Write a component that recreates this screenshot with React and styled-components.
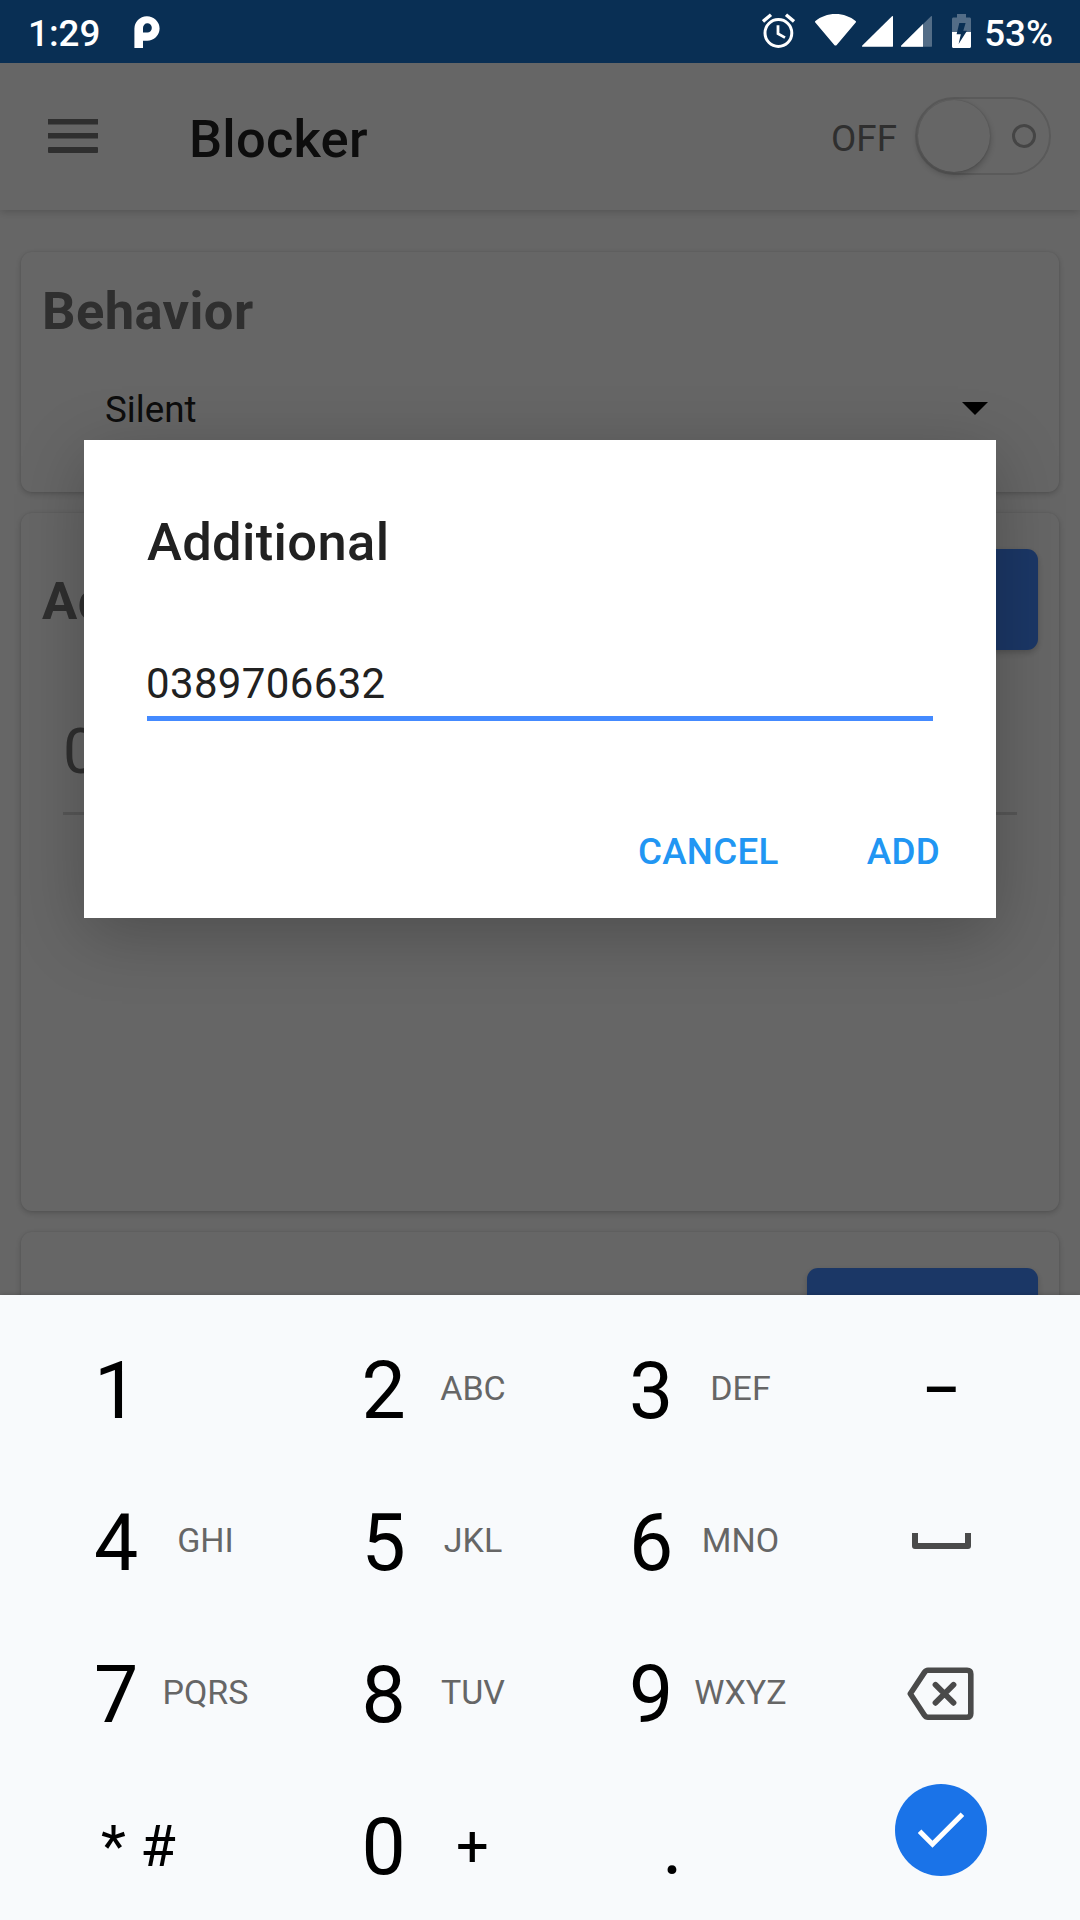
import React, { useState } from 'react'
import styled, { createGlobalStyle } from 'styled-components';

const GlobalStyle = createGlobalStyle`
    * {
        box-sizing: border-box;
    }
    body {
        margin: 0;
        font-family: Roboto, sans-serif;
    }
`

const Phone = styled.div`
    display: flex;
    flex-direction: column;
    width: 1080px;
    height: 1920px;
    overflow: hidden;
    background: #fff;
`

/* status bar */

const StatusBar = styled.div`
    display: flex;
    align-items: flex-start;
    flex: none;
    height: 63px;
    padding: 0 27px 0 28px;
    background: #092f54;
    color: #fff;

    svg {
        display: block;
        flex: none;
    }
`

const StatusText = styled.span`
    font-size: 36.75px;
    font-weight: 500;
    line-height: 43px;
    padding-top: 12px;
`

const NotificationIcon = styled.svg`
    margin: 16px 0 0 34px;
`

const StatusIcons = styled.div`
    display: flex;
    margin-left: auto;
    margin-right: 13px;
`

/* page behind the dialog */

const Page = styled.div`
    position: relative;
    flex: none;
    height: 1232px;
    overflow: hidden;
    background: #fff;
`

const Toolbar = styled.div`
    display: flex;
    align-items: center;
    height: 147px;
    padding: 0 29px 0 48px;
    box-shadow: 0 2px 8px rgba(0, 0, 0, 0.18);
`

const MenuIcon = styled.svg`
    display: block;
    margin-top: -1px;
`

const ToolbarTitle = styled.h1`
    margin: 4px 0 0 91px;
    color: #212121;
    font-size: 52.5px;
    font-weight: 500;
    line-height: 62px;
    letter-spacing: 0.2px;
`

const SwitchLabel = styled.span`
    margin: 5px 18px 0 auto;
    color: #757575;
    font-size: 36.75px;
    line-height: 44px;
`

const Switch = styled.button`
    display: flex;
    align-items: center;
    justify-content: space-between;
    width: 136px;
    height: 78px;
    padding: 0 13px 0 1px;
    border: 2px solid #e0e0e0;
    border-radius: 39px;
    background: #fff;
    margin-top: -1px;
`

const Thumb = styled.span`
    width: 72px;
    height: 72px;
    border-radius: 50%;
    background: #fff;
    box-shadow: 0 3px 7px rgba(0, 0, 0, 0.25), 0 0 2px rgba(0, 0, 0, 0.2);
`

const OffRing = styled.span`
    width: 24px;
    height: 24px;
    border: 3px solid #adadad;
    border-radius: 50%;
`

const Content = styled.div`
    display: flex;
    flex-direction: column;
    gap: 21px;
    padding: 42px 21px 0;
`

const Card = styled.section`
    flex: none;
    height: ${props => props.$height}px;
    padding: 0 21px;
    border-radius: 11px;
    background: #fff;
    box-shadow: 0 2px 6px rgba(0, 0, 0, 0.2), 0 0 2px rgba(0, 0, 0, 0.1);
`

const CardHeader = styled.div`
    display: flex;
    align-items: center;
    justify-content: space-between;
    height: ${props => props.$height}px;
    padding-top: ${props => props.$top || 0}px;
`

const CardTitle = styled.h2`
    margin: ${props => props.$drop || 0}px 0 0;
    color: #757575;
    font-size: 52.5px;
    font-weight: 700;
    line-height: 62px;
    letter-spacing: 0.4px;
`

const CardButton = styled.button`
    width: 231px;
    height: 101px;
    border: 0;
    border-radius: 11px;
    background: #448aff;
    box-shadow: 0 3px 6px rgba(0, 0, 0, 0.2);
`

const Select = styled.div`
    display: flex;
    align-items: center;
    justify-content: space-between;
    height: 44px;
    margin-top: 19px;
    padding: 0 50px 0 63px;
    color: #212121;
    font-size: 36.75px;
    line-height: 44px;
`

const Caret = styled.span`
    margin-bottom: 4px;
    border-left: 13px solid transparent;
    border-right: 13px solid transparent;
    border-top: 13px solid #000;
`

const NumberRow = styled.div`
    height: 126px;
    margin: 39px 21px 0;
    border-bottom: 3px solid #d9d9d9;
    color: #757575;
    font-size: 63px;
    line-height: 125px;
`

/* dialog */

const Scrim = styled.div`
    position: absolute;
    inset: 0;
    display: flex;
    justify-content: center;
    align-items: flex-start;
    padding-top: 377px;
    background: rgba(0, 0, 0, 0.6);
`

const Dialog = styled.div`
    display: flex;
    flex-direction: column;
    width: 912px;
    height: 478px;
    padding: 71px 34px 0 63px;
    background: #fff;
    box-shadow: 0 16px 64px rgba(0, 0, 0, 0.24);
`

const DialogTitle = styled.h3`
    margin: 0;
    color: #212121;
    font-size: 52.5px;
    font-weight: 500;
    line-height: 62px;
    letter-spacing: 0.35px;
`

const DialogInput = styled.input`
    width: 786px;
    height: 73px;
    margin-top: 75px;
    padding: 3px 0 0;
    border: 0;
    border-bottom: 5px solid #448aff;
    outline: none;
    color: #212121;
    font-family: inherit;
    font-size: 42px;
    letter-spacing: 0.35px;
    text-indent: -1px;
`

const DialogActions = styled.div`
    display: flex;
    justify-content: flex-end;
    gap: 46px;
    margin-top: 84px;
    padding-right: 1px;
`

const DialogAction = styled.button`
    padding: 0 21px;
    border: 0;
    background: none;
    color: #2196f3;
    font-family: inherit;
    font-size: 36.75px;
    font-weight: 500;
    line-height: 94px;
    letter-spacing: 0.3px;
`

/* keyboard */

const Keyboard = styled.div`
    position: relative;
    display: grid;
    flex: none;
    grid-template-columns: 267.5px 267.5px 267.5px 263px;
    grid-template-rows: repeat(4, 152px);
    height: 625px;
    padding: 19px 0 0 7px;
    background: #f8fafc;
    box-shadow: 0 0 5px rgba(0, 0, 0, 0.2);
`

const Key = styled.div`
    display: flex;
    align-items: center;
    padding-left: 87px;
    color: #000;
`

const Digit = styled.span`
    width: 44px;
    font-size: 78.75px;
    line-height: 92px;
    padding-top: 2px;
`

const Letters = styled.span`
    width: 100px;
    margin-left: 17.5px;
    padding-bottom: 4px;
    color: #666;
    font-size: 34px;
    line-height: 40px;
    text-align: center;
`

const Symbols = styled.span`
    padding: 0 0 0 ${props => props.$left || 0}px;
    font-size: 57.75px;
    line-height: 68px;
    white-space: pre;
`

const Dot = styled(Digit)`
    margin-left: 33px;
`

const ActionKey = styled.div`
    display: flex;
    align-items: center;
    justify-content: center;
    padding-bottom: ${props => props.$lift || 0}px;
`

const Dash = styled.span`
    font-size: 57.75px;
    font-weight: 500;
    line-height: 68px;
`

const EnterCircle = styled.span`
    display: flex;
    align-items: center;
    justify-content: center;
    width: 92px;
    height: 92px;
    border-radius: 50%;
    background: #1a73e8;
`

const AlarmIcon = () => (
    <svg width="33" height="36" viewBox="0 0 33 36" fill="none" stroke="#fff" strokeWidth="3">
        <circle cx="16.4" cy="20" r="13.4" />
        <path d="M16 12.3v8.3l7 4" strokeWidth="2.8" />
        <path d="M1 8.5l8-6.7M24 1.8l8 6.7" strokeWidth="3.4" />
    </svg>
)

const SystemIcons = styled.div`
    display: flex;
    padding-top: 13px;
`

const Gap = styled.span`
    width: ${props => props.$w}px;
`

const WifiIcon = () => (
    <svg width="41" height="34" viewBox="0 0 41 34" fill="#fff">
        <path d="M20.5 1C12.6 1 5.6 3.7.4 8c-.5.4-.5 1-.1 1.5L19.3 32c.7.8 1.7.8 2.4 0l19-22.5c.4-.5.4-1.1-.1-1.5C35.4 3.7 28.4 1 20.5 1z" />
    </svg>
)

const SignalIcon = ({ weak }) => (
    <svg width="31" height="34" viewBox="0 0 31 34" fill="#fff">
        <path d="M30 3.3c.6-.4 1-.2 1 .6V33c0 .6-.2.8-.8.8H.8c-.9 0-1-.6-.5-1.2z" opacity={weak ? 0.3 : 1} />
        {weak && <path d="M22 11v22.800H.8c-.9 0-1-.6-.5-1.2z" />}
    </svg>
)

const BatteryIcon = () => (
    <svg width="19" height="35" viewBox="0 0 19 35">
        <path d="M5 1h9v3.500h3.500c.9 0 1.500.6 1.500 1.500v13H0V6c0-.9.6-1.500 1.500-1.500H5z" fill="#fff" opacity="0.3" />
        <path d="M0 19h19v14.500c0 .9-.6 1.500-1.500 1.500h-16C.6 35 0 34.400 0 33.500z" fill="#fff" />
        <path d="M7.300 10H13.600L11.300 17.700H15L6.600 31 8.800 21.300H4.600z" fill="#092f54" />
    </svg>
)

const SpaceIcon = styled.svg`
    margin-bottom: 3px;
`

const BackspaceIcon = styled.svg`
    margin-right: 2px;
`

const CheckIcon = () => (
    <svg width="46" height="36" viewBox="0 0 46 36" fill="none" stroke="#fff" strokeWidth="5">
        <path d="M1.600 19.200L14.500 32.200 44.400 2.200" />
    </svg>
)

const keys = [
    { digit: '1' },
    { digit: '2', letters: 'ABC' },
    { digit: '3', letters: 'DEF' },
    { action: <Dash>–</Dash> },
    { digit: '4', letters: 'GHI' },
    { digit: '5', letters: 'JKL' },
    { digit: '6', letters: 'MNO' },
    {
        action: (
            <SpaceIcon width="59" height="16" viewBox="0 0 59 16" fill="none" stroke="#4a4a4a" strokeWidth="6" strokeLinejoin="round">
                <path d="M3 0v13h53V0" />
            </SpaceIcon>
        )
    },
    { digit: '7', letters: 'PQRS' },
    { digit: '8', letters: 'TUV' },
    { digit: '9', letters: 'WXYZ' },
    {
        action: (
            <BackspaceIcon width="67" height="54" viewBox="0 0 67 54" fill="none" stroke="#4a4a4a" strokeLinejoin="round" strokeLinecap="round">
                <path d="M21 3.300H60Q63.800 3.300 63.800 7V46.500Q63.800 50.300 60 50.300H21Q18.800 50.300 17.300 48L3.300 26.800 17.300 5.600Q18.800 3.300 21 3.300z" strokeWidth="5.600" />
                <path d="M28.500 17.800l18 18M46.500 17.800l-18 18" strokeWidth="5.800" />
            </BackspaceIcon>
        )
    },
]

const NumberPad = () => (
    <Keyboard>
        {keys.map((key, i) => key.action
            ? <ActionKey key={i}>{key.action}</ActionKey>
            : (
                <Key key={i}>
                    <Digit>{key.digit}</Digit>
                    {key.letters && <Letters>{key.letters}</Letters>}
                </Key>
            ))}
        <Key>
            <Symbols $left={7}>* #</Symbols>
        </Key>
        <Key>
            <Digit>0</Digit>
            <Symbols $left={50.5}>+</Symbols>
        </Key>
        <Key>
            <Dot>.</Dot>
        </Key>
        <ActionKey $lift={32}>
            <EnterCircle><CheckIcon /></EnterCircle>
        </ActionKey>
    </Keyboard>
)

const App = () => {
    const [number, setNumber] = useState('0389706632')

    return (
        <Phone>
            <GlobalStyle />
            <StatusBar>
                <StatusText>1:29</StatusText>
                <NotificationIcon width="26" height="32" viewBox="0 0 26 32" fill="#fff" fillRule="evenodd">
                    <path d="M.4 32V13A12.600 12.600 0 0 1 25.600 12.500 12.400 12.400 0 0 1 13 24.700H9V32zM9 16.500V12A4.400 4.600 0 1 1 13.400 16.500z" />
                </NotificationIcon>
                <StatusIcons>
                    <SystemIcons>
                        <AlarmIcon />
                        <Gap $w={20} />
                        <WifiIcon />
                        <Gap $w={6} />
                        <SignalIcon />
                        <Gap $w={8} />
                        <SignalIcon weak />
                        <Gap $w={20} />
                        <BatteryIcon />
                    </SystemIcons>
                </StatusIcons>
                <StatusText>53%</StatusText>
            </StatusBar>
            <Page>
                <Toolbar>
                    <MenuIcon width="50" height="34" viewBox="0 0 50 34" fill="#757575">
                        <rect width="50" height="5.5" />
                        <rect y="14" width="50" height="5.5" />
                        <rect y="28" width="50" height="6" rx="1" />
                    </MenuIcon>
                    <ToolbarTitle>Blocker</ToolbarTitle>
                    <SwitchLabel>OFF</SwitchLabel>
                    <Switch>
                        <Thumb />
                        <OffRing />
                    </Switch>
                </Toolbar>
                <Content>
                    <Card $height={240}>
                        <CardHeader $height={117}>
                            <CardTitle>Behavior</CardTitle>
                        </CardHeader>
                        <Select>
                            Silent
                            <Caret />
                        </Select>
                    </Card>
                    <Card $height={698}>
                        <CardHeader $height={137} $top={36}>
                            <CardTitle $drop={3}>Additional</CardTitle>
                            <CardButton />
                        </CardHeader>
                        <NumberRow>0389706632</NumberRow>
                    </Card>
                    <Card $height={400}>
                        <CardHeader $height={137} $top={36}>
                            <CardTitle />
                            <CardButton />
                        </CardHeader>
                    </Card>
                </Content>
                <Scrim>
                    <Dialog>
                        <DialogTitle>Additional</DialogTitle>
                        <DialogInput value={number} onChange={e => setNumber(e.target.value)} />
                        <DialogActions>
                            <DialogAction>CANCEL</DialogAction>
                            <DialogAction>ADD</DialogAction>
                        </DialogActions>
                    </Dialog>
                </Scrim>
            </Page>
            <NumberPad />
        </Phone>
    )
}

export default App;
